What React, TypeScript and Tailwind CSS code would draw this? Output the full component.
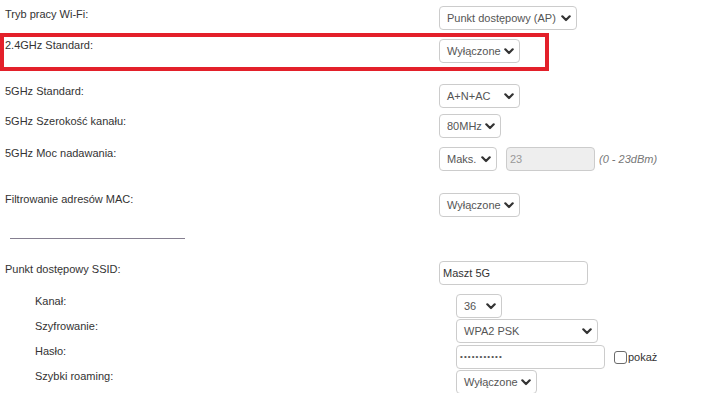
import React from "react";

// ─── Fake select box (router admin style) ───────────────────────────
function Chevron() {
  return (
    <svg width="10" height="7" viewBox="0 0 10 7" className="shrink-0">
      <path d="M1.3 1.3 L5 5 L8.7 1.3" fill="none" stroke="#333" strokeWidth="2.2" strokeLinecap="round" strokeLinejoin="round" />
    </svg>
  );
}

function Select({ value, w }: { value: string; w: string }) {
  return (
    <div
      className={`${w} h-6 shrink-0 flex items-center justify-between pl-[7px] pr-[5px] border border-[#ccc] rounded-[4px] bg-white text-[11px] text-[#555] leading-none`}
    >
      <span className="whitespace-nowrap">{value}</span>
      <Chevron />
    </div>
  );
}

interface RowProps {
  label: string;
  sub?: boolean;
  className?: string;
  pt?: string;
  children: React.ReactNode;
}

function Row({ label, sub, className = "", pt = "pt-px", children }: RowProps) {
  return (
    <div className={`flex items-start ${sub ? "pl-[35px]" : "pl-[5px]"} ${className}`}>
      <div className={`${sub ? "w-[421px]" : "w-[434px]"} shrink-0 ${pt} text-[11px] leading-[13px] text-[#333]`}>
        {label}
      </div>
      <div className="flex items-center">{children}</div>
    </div>
  );
}

export default function App() {
  return (
    <div
      className="w-[722px] h-[393px] overflow-hidden bg-white pt-[6px]"
      style={{ fontFamily: '"Liberation Sans", Arial, sans-serif' }}
    >
      <Row label="Tryb pracy Wi-Fi:" pt="pt-[2px]">
        <Select value="Punkt dostępowy (AP)" w="w-[138px]" />
      </Row>

      {/* highlighted row */}
      <div className="mt-[3px] w-[549px] h-[38px] border-4 border-[#e3202a] pt-[2px] flex items-start pl-px">
        <div className="w-[434px] shrink-0 pt-0 text-[11px] leading-[13px] text-[#333]">2.4GHz Standard:</div>
        <Select value="Wyłączone" w="w-[81px]" />
      </div>

      <Row label="5GHz Standard:" className="mt-[13px]">
        <Select value="A+N+AC" w="w-[81px]" />
      </Row>
      <Row label="5GHz Szerokość kanału:" className="mt-[6px]">
        <Select value="80MHz" w="w-[62px]" />
      </Row>
      <Row label="5GHz Moc nadawania:" className="mt-[9px]" pt="pt-0">
        <Select value="Maks." w="w-[58px]" />
        <div className="ml-[9px] w-[89px] h-6 flex items-center pl-[3px] border border-[#ccc] rounded-[4px] bg-[#eee] text-[11px] text-[#999]">
          23
        </div>
        <span className="ml-[4px] text-[11px] italic text-[#777]">(0 - 23dBm)</span>
      </Row>

      <Row label="Filtrowanie adresów MAC:" className="mt-[22px]" pt="pt-0">
        <Select value="Wyłączone" w="w-[81px]" />
      </Row>

      <div className="mt-[21px] ml-[10px] w-[175px] h-px bg-[#857f90]" />

      <Row label="Punkt dostępowy SSID:" className="mt-[22px]" pt="pt-[2px]">
        <div className="w-[149px] h-6 flex items-center pl-[3px] border border-[#ccc] rounded-[4px] bg-white text-[11px] text-[#333]">
          Maszt 5G
        </div>
      </Row>

      <Row label="Kanał:" sub className="mt-[9px]">
        <Select value="36" w="w-[46px]" />
      </Row>
      <Row label="Szyfrowanie:" sub className="mt-px">
        <Select value="WPA2 PSK" w="w-[142px]" />
      </Row>
      <Row label="Hasło:" sub className="mt-[2px]" pt="pt-0">
        <div className="w-[149px] h-6 flex items-center pl-[3px] border border-[#ccc] rounded-[4px] bg-white text-[8px] tracking-[1.1px] text-[#555]">
          •••••••••••
        </div>
        <div className="ml-[9px] w-[13px] h-[13px] border border-[#6b6b6b] rounded-[3px] bg-white" />
        <span className="ml-px text-[11px] text-[#333]">pokaż</span>
      </Row>
      <Row label="Szybki roaming:" sub className="mt-px" pt="pt-0">
        <Select value="Wyłączone" w="w-[81px]" />
      </Row>
    </div>
  );
}
